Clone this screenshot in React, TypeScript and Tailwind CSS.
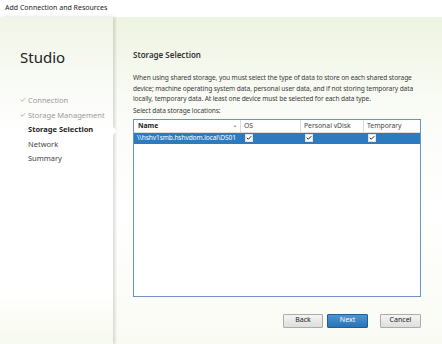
import { Check } from "lucide-react";

const steps = [
  { label: "Connection", done: true },
  { label: "Storage Management", done: true },
  { label: "Storage Selection", current: true },
  { label: "Network" },
  { label: "Summary" },
];

const CheckBox = () => (
  <span className="inline-flex h-[8px] w-[8px] items-center justify-center border border-[#d9e6f2] bg-white">
    <Check className="h-[8px] w-[8px] text-[#1b2430]" strokeWidth={4} />
  </span>
);

const App = () => {
  return (
    <div
      className="flex h-[344px] w-[442px] flex-col overflow-hidden bg-white text-[#333]"
      style={{ fontFamily: '"Noto Sans", "Open Sans", sans-serif' }}
    >
      {/* title bar */}
      <div className="flex h-[17px] shrink-0 items-center bg-white pl-[5px] text-[7px] text-[#222]">
        Add Connection and Resources
      </div>

      <div className="flex flex-1 bg-[linear-gradient(180deg,#eef4e2_0%,#fbfcf8_30%,#ffffff_60%,#f9fbf3_100%)]">
        {/* left panel */}
        <div className="relative w-[113px] shrink-0 bg-[linear-gradient(180deg,#f1f5e8_0%,#ffffff_35%,#ffffff_85%,#f6f9ee_100%)] pl-[20px] pt-[31px] shadow-[2px_0_3px_rgba(0,0,0,0.15)]">
          <div className="text-[15px] leading-[18px] text-[#222]">Studio</div>
          <div className="mt-[29px] flex flex-col gap-[4px] text-[7.5px] leading-[10.5px]">
            {steps.map((s) =>
              s.done ? (
                <div key={s.label} className="flex items-center gap-[2px] text-[#9a9a9a]">
                  <Check className="h-[6px] w-[6px]" strokeWidth={3} />
                  <span>{s.label}</span>
                </div>
              ) : (
                <div
                  key={s.label}
                  className={
                    s.current
                      ? "pl-[8px] font-bold text-[#1e1e1e]"
                      : "pl-[8px] text-[#444]"
                  }
                >
                  {s.label}
                </div>
              )
            )}
          </div>
          <span className="absolute right-[-4px] top-[110px] h-0 w-0 border-y-[4px] border-l-[4px] border-y-transparent border-l-white" />
        </div>

        {/* right content */}
        <div className="flex flex-1 flex-col pl-[20px] pr-[21px] pt-[33px]">
          <div className="text-[8px] font-semibold leading-[10px] text-[#333]">
            Storage Selection
          </div>
          <p className="mt-[13px] whitespace-nowrap text-[6.6px] leading-[10.5px] tracking-[-0.1px] text-[#3a3a3a]">
            When using shared storage, you must select the type of data to store on each shared storage
            <br />
            device; machine operating system data, personal user data, and if not storing temporary data
            <br />
            locally, temporary data. At least one device must be selected for each data type.
          </p>
          <div className="mt-[1px] text-[6.6px] leading-[10px] tracking-[-0.1px] text-[#3a3a3a]">
            Select data storage locations:
          </div>

          <div className="mt-[3px] h-[178px] border border-[#6d93c4] bg-white">
            <div className="flex h-[13px] border-b border-[#dcdcdc] text-[6.8px] leading-[12px]">
              <div className="relative w-[107px] border-r border-[#dcdcdc] pl-[4px] font-bold text-[#222]">
                Name
                <span className="absolute right-[3px] top-0 text-[4px] text-[#999]">▲</span>
              </div>
              <div className="w-[60px] border-r border-[#dcdcdc] pl-[3px] text-[#444]">OS</div>
              <div className="w-[63px] border-r border-[#dcdcdc] pl-[3px] text-[#444]">Personal vDisk</div>
              <div className="flex-1 pl-[3px] text-[#444]">Temporary</div>
            </div>
            <div className="flex h-[11px] items-center bg-[#2c7bc0] text-[6.6px] tracking-[-0.1px] text-white">
              <div className="w-[108px] whitespace-nowrap pl-[3px]">\\hshv1smb.hshvdom.local\DS01</div>
              <div className="flex w-[60px] pl-[3px]"><CheckBox /></div>
              <div className="flex w-[64px] pl-[3px]"><CheckBox /></div>
              <div className="flex flex-1 pl-[2px]"><CheckBox /></div>
            </div>
          </div>

          <div className="mt-[17px] flex justify-end text-[7px]">
            <button className="h-[14px] w-[40px] rounded-[1px] border border-[#acacac] bg-[linear-gradient(180deg,#f4f4f4,#dedede)] text-[#222]">
              Back
            </button>
            <button className="ml-[4px] h-[14px] w-[41px] rounded-[1px] border border-[#1f5f98] bg-[linear-gradient(180deg,#4a95d4,#2a74b6)] text-white">
              Next
            </button>
            <button className="ml-[12px] h-[14px] w-[41px] rounded-[1px] border border-[#acacac] bg-[linear-gradient(180deg,#f4f4f4,#dedede)] text-[#222]">
              Cancel
            </button>
          </div>
        </div>
      </div>
    </div>
  );
};

export default App;
